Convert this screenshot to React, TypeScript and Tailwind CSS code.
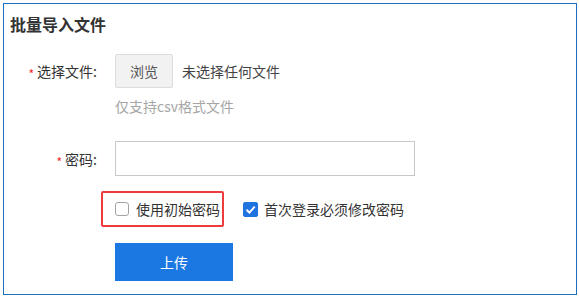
import { useState } from 'react';

function Star() {
  return <span className="mr-[3px] text-[12px] leading-none text-[#f5222d] relative top-[3px]">*</span>;
}

export default function App() {
  const [useInitial, setUseInitial] = useState(false);
  const [mustChange, setMustChange] = useState(true);

  return (
    <div
      className="w-[579px] h-[297px] bg-white p-[3px] text-[#333]"
      style={{ fontFamily: '"Microsoft YaHei", "Noto Sans CJK SC", "Noto Sans", sans-serif' }}
    >
      <div className="w-[574px] h-[292px] border border-[#1c6fbf] flex flex-col">
        <h2 className="mt-[8px] pl-[6px] text-[16px] font-bold leading-[24px] text-[#333]">批量导入文件</h2>

        {/* file row */}
        <div className="mt-[18px] flex items-center h-[34px]">
          <label className="w-[93px] flex items-center justify-end text-[14px] leading-[20px]">
            <Star />
            选择文件:
          </label>
          <div className="ml-[18px] flex items-center">
            <button className="w-[58px] h-[34px] rounded-[2px] border border-[#dcdcdc] bg-[#f2f2f2] text-[14px] text-[#555]">
              浏览
            </button>
            <span className="ml-[9px] text-[14px] text-[#444]">未选择任何文件</span>
          </div>
        </div>
        <p className="mt-[8px] ml-[111px] text-[14px] leading-[20px] text-[#a6a6a6]">仅支持csv格式文件</p>

        {/* password row */}
        <div className="mt-[25px] flex items-center h-[35px]">
          <label className="w-[93px] flex items-center justify-end text-[14px] leading-[20px]">
            <Star />
            密码:
          </label>
          <input
            type="password"
            className="ml-[18px] w-[300px] h-[35px] border border-[#c8c8c8] outline-none px-2 text-[14px]"
          />
        </div>

        {/* checkbox row */}
        <div className="mt-[15px] ml-[97px] flex items-center">
          <div
            className="w-[123px] h-[36px] border-2 border-[#ee3b3b] rounded-[2px] flex items-center pl-[12px] cursor-pointer"
            onClick={() => setUseInitial(!useInitial)}
          >
            <span
              className={`w-[14px] h-[14px] rounded-[3px] border flex items-center justify-center ${
                useInitial ? 'bg-[#1f74e0] border-[#1f74e0]' : 'border-[#a3a3a3] bg-white'
              }`}
            >
              {useInitial && (
                <svg width="12" height="12" viewBox="0 0 12 12">
                  <path d="M2.5 6.2 L5 8.6 L9.8 3.6" fill="none" stroke="white" strokeWidth="2" />
                </svg>
              )}
            </span>
            <span className="ml-[7px] text-[14px] leading-[20px] text-[#333]">使用初始密码</span>
          </div>
          <div className="ml-[19px] flex items-center cursor-pointer" onClick={() => setMustChange(!mustChange)}>
            <span
              className={`w-[15px] h-[15px] rounded-[2px] border flex items-center justify-center ${
                mustChange ? 'bg-[#1f74e0] border-[#1f74e0]' : 'border-[#a3a3a3] bg-white'
              }`}
            >
              {mustChange && (
                <svg width="13" height="13" viewBox="0 0 12 12">
                  <path d="M2.3 6.2 L5 8.8 L9.9 3.4" fill="none" stroke="white" strokeWidth="1.8" />
                </svg>
              )}
            </span>
            <span className="ml-[6px] text-[14px] leading-[20px] text-[#333]">首次登录必须修改密码</span>
          </div>
        </div>

        {/* submit */}
        <button className="mt-[16px] ml-[111px] w-[118px] h-[38px] bg-[#1b78e2] text-white text-[14px]">上传</button>
      </div>
    </div>
  );
}
